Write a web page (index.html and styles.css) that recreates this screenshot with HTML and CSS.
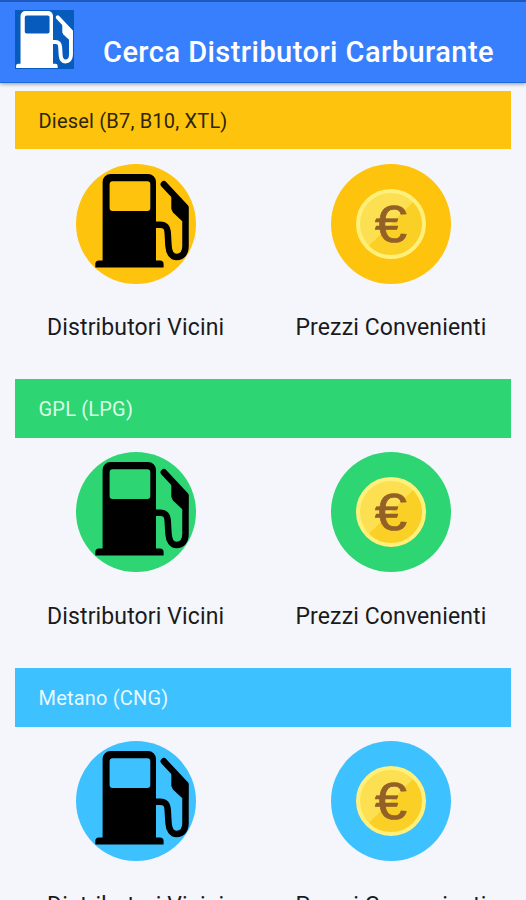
FILE: index.html
```html
<!DOCTYPE html>
<html lang="it">
<head>
  <meta charset="UTF-8">
  <title>Cerca Distributori Carburante</title>
  <link rel="stylesheet" href="styles.css">
</head>
<body>

  <!-- shared icons -->
  <svg class="sprite" width="0" height="0">
    <symbol id="pump" viewBox="0 0 120 120">
      <path fill="currentColor" fill-rule="evenodd" d="M34.600 10H72a8 8 0 0 1 8 8V96.500H84a3.600 3.600 0 0 1 3.600 3.600V103.500H19.300V100.100a3.600 3.600 0 0 1 3.600-3.600H26.600V18a8 8 0 0 1 8-8ZM36.600 17.300a3 3 0 0 0-3 3V44a3 3 0 0 0 3 3H71.300a3 3 0 0 0 3-3V20.300a3 3 0 0 0-3-3Z"/>
      <path class="hose" fill="none" stroke="currentColor" stroke-linecap="round" stroke-linejoin="round" d="M79 60.800H84C90 60.800 91.600 64 91.800 70L92.500 82C93 89 96 93 100.500 93C106 93 109.500 89 109.500 82V43.500L87.800 20.300"/>
      <path fill="currentColor" d="M95.300 30L111 41L112.200 43V57H106L97 48.500L95.300 45Z"/>
    </symbol>
    <symbol id="coin" viewBox="0 0 120 120">
      <circle cx="60" cy="60" r="33" fill="#fde051"/>
      <path fill="#fbd026" d="M84 36A33 33 0 0 1 36.500 83.200Z"/>
      <circle cx="60" cy="60" r="33" fill="none" stroke="#fff07c" stroke-width="4"/>
      <text class="euro" transform="translate(60 78) scale(1.120 1)" text-anchor="middle">€</text>
    </symbol>
  </svg>

  <header class="topbar">
    <svg class="logo" viewBox="17.500 8.300 97 97"><use href="#pump" width="120" height="120"/></svg>
    <h1>Cerca Distributori Carburante</h1>
  </header>

  <main>
    <section class="fuel diesel">
      <h2>Diesel (B7, B10, XTL)</h2>
      <div class="actions">
        <a class="action"><svg><use href="#pump"/></svg><span>Distributori Vicini</span></a>
        <a class="action"><svg><use href="#coin"/></svg><span>Prezzi Convenienti</span></a>
      </div>
    </section>

    <section class="fuel gpl">
      <h2>GPL (LPG)</h2>
      <div class="actions">
        <a class="action"><svg><use href="#pump"/></svg><span>Distributori Vicini</span></a>
        <a class="action"><svg><use href="#coin"/></svg><span>Prezzi Convenienti</span></a>
      </div>
    </section>

    <section class="fuel metano">
      <h2>Metano (CNG)</h2>
      <div class="actions">
        <a class="action"><svg><use href="#pump"/></svg><span>Distributori Vicini</span></a>
        <a class="action"><svg><use href="#coin"/></svg><span>Prezzi Convenienti</span></a>
      </div>
    </section>
  </main>

</body>
</html>
```
FILE: styles.css
```css
* {
  box-sizing: border-box;
}
body {
  margin: 0;
  height: 900px;
  overflow: hidden;
  font-family: Roboto, sans-serif;
  background: #f4f6fb;
  color: #1a1a1c;
}
.sprite {
  display: block;
}
.topbar {
  display: flex;
  align-items: flex-start;
  height: 83px;
  padding: 8px 15px 0;
  background: #387ffe;
  border-top: 2px solid #1f58b8;
  border-bottom: 1px solid #1c6be0;
  box-shadow: 0 1px 4px rgba(0,0,0,0.4);
}
.logo {
  width: 59px;
  height: 59px;
  background: #075bbd;
  color: white;
}
.hose {
  stroke-width: 6.5px;
}
h1 {
  margin: 24px 0 0 29px;
  font-size: 29px;
  line-height: 36px;
  font-weight: 500;
  letter-spacing: 0.45px;
  color: white;
  white-space: nowrap;
}
main {
  padding-top: 7.7px;
}
.fuel {
  height: 288.7px;
}
h2 {
  height: 58.5px;
  margin: 0 15px;
  padding-left: 23.5px;
  font-size: 20px;
  line-height: 60px;
  font-weight: 400;
  letter-spacing: 0.2px;
}
.actions {
  display: grid;
  grid-template-columns: 255.3px 255.3px;
  padding: 14.5px 0 0 8px;
}
.action {
  display: flex;
  flex-direction: column;
  align-items: center;
}
.action svg {
  width: 120px;
  height: 120px;
  border-radius: 50%;
  color: black;
}
.action span {
  margin-top: 29.5px;
  font-size: 23px;
  line-height: 30px;
  letter-spacing: 0.13px;
  white-space: nowrap;
}
.euro {
  font-family: "Liberation Sans", sans-serif;
  font-size: 52px;
  fill: #936027;
  stroke: #936027;
  stroke-width: 0.7px;
  stroke-linejoin: round;
}
.diesel h2 {
  background: #fec30c;
  color: #2e2508;
}
.diesel svg {
  background: #fec30c;
}
.gpl h2 {
  background: #2ed573;
  color: #dcffe8;
}
.gpl svg {
  background: #2ed573;
}
.metano h2 {
  background: #3dc1ff;
  color: #e8f8ff;
}
.metano svg {
  background: #3dc1ff;
}
```
